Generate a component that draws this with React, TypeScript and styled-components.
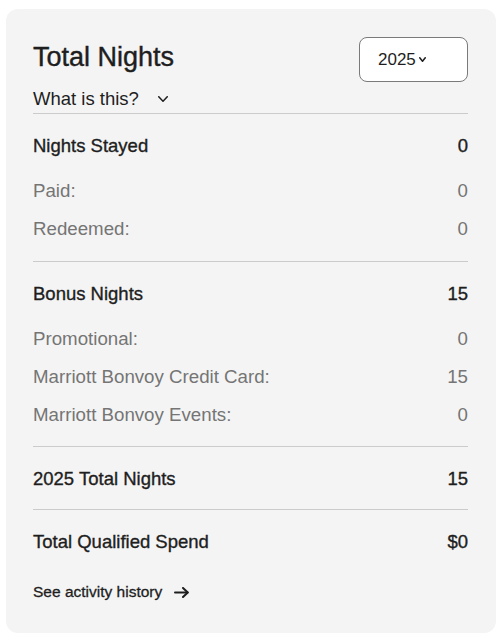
import React from "react";
import styled, { createGlobalStyle } from "styled-components";

const Global = createGlobalStyle`
  html, body { margin: 0; padding: 0; background: #ffffff; }
  body { font-family: "Liberation Sans", Arial, Helvetica, sans-serif; color: #1e1e1e; }
  * { box-sizing: border-box; }
`;

const Card = styled.section`
  margin: 9px 0 0 6px;
  width: 490px;
  background: #f4f4f4;
  border-radius: 12px;
  padding: 28px 28px 31px 27px;
  display: flex;
  flex-direction: column;
`;

const Header = styled.div`
  display: flex;
  justify-content: space-between;
  align-items: flex-start;
`;

const TitleBlock = styled.div`
  display: flex;
  flex-direction: column;
  padding-top: 5px;
`;

const Title = styled.h2`
  margin: 0;
  font-size: 27px;
  line-height: 30px;
  font-weight: 400;
  -webkit-text-stroke: 0.4px #1e1e1e;
  color: #1e1e1e;
`;

const WhatButton = styled.button`
  margin-top: 15px;
  padding: 0;
  border: 0;
  background: none;
  display: flex;
  align-items: center;
  gap: 19px;
  font-family: inherit;
  font-size: 18.5px;
  line-height: 24px;
  color: #1e1e1e;
  cursor: pointer;
`;

const YearSelect = styled.button`
  width: 109px;
  height: 45px;
  border: 1px solid #7a7a7a;
  border-radius: 8px;
  background: #ffffff;
  display: flex;
  align-items: center;
  padding: 0 0 0 18px;
  gap: 3px;
  font-family: inherit;
  font-size: 17px;
  color: #1e1e1e;
  cursor: pointer;
`;

const Divider = styled.hr`
  margin: 2px 0 0;
  border: 0;
  border-top: 1px solid #cbcbcb;
  height: 0;
`;

const Section = styled.div<{ $bottom?: number }>`
  display: flex;
  flex-direction: column;
  padding: 12px 0 ${(p) => p.$bottom ?? 13}px;
`;

const HeadRow = styled.div`
  display: flex;
  justify-content: space-between;
  align-items: center;
  height: 40px;
  font-size: 18.5px;
  color: #1e1e1e;
  -webkit-text-stroke: 0.35px #1e1e1e;
`;

const SubList = styled.div`
  display: flex;
  flex-direction: column;
  margin-top: 6px;
`;

const SubRow = styled.div`
  display: flex;
  justify-content: space-between;
  align-items: center;
  height: 38px;
  font-size: 18.7px;
  color: #757575;
`;

const LineDivider = styled.hr`
  margin: 0;
  border: 0;
  border-top: 1px solid #cbcbcb;
  height: 0;
`;

const HistoryLink = styled.a`
  margin-top: 20px;
  display: flex;
  align-items: center;
  gap: 12px;
  height: 20px;
  font-size: 15.5px;
  color: #1e1e1e;
  -webkit-text-stroke: 0.3px #1e1e1e;
  text-decoration: none;
  cursor: pointer;
`;

const Chevron = ({ w, h, sw }: { w: number; h: number; sw: number }) => (
  <svg width={w} height={h} viewBox={`0 0 ${w} ${h}`} fill="none">
    <path
      d={`M${sw / 2} ${sw / 2} L${w / 2} ${h - sw / 2} L${w - sw / 2} ${sw / 2}`}
      stroke="#1e1e1e"
      strokeWidth={sw}
      strokeLinecap="round"
      strokeLinejoin="round"
    />
  </svg>
);

const Arrow = () => (
  <svg width="15" height="11" viewBox="0 0 15 11" fill="none">
    <path d="M1 5.5 H13.5" stroke="#1e1e1e" strokeWidth="2" strokeLinecap="round" />
    <path
      d="M9 1 L13.8 5.5 L9 10"
      stroke="#1e1e1e"
      strokeWidth="2"
      strokeLinecap="round"
      strokeLinejoin="round"
    />
  </svg>
);

type Item = { label: string; value: string };

const Group = ({
  title,
  value,
  items,
  bottom,
}: {
  title: string;
  value: string;
  items: Item[];
  bottom?: number;
}) => (
  <Section $bottom={bottom}>
    <HeadRow>
      <span>{title}</span>
      <span>{value}</span>
    </HeadRow>
    <SubList>
      {items.map((it) => (
        <SubRow key={it.label}>
          <span>{it.label}</span>
          <span>{it.value}</span>
        </SubRow>
      ))}
    </SubList>
  </Section>
);

export default function App() {
  return (
    <>
      <Global />
      <Card>
        <Header>
          <TitleBlock>
            <Title>Total Nights</Title>
            <WhatButton>
              What is this?
              <Chevron w={10} h={6} sw={1.5} />
            </WhatButton>
          </TitleBlock>
          <YearSelect>
            2025
            <Chevron w={7} h={5} sw={1.5} />
          </YearSelect>
        </Header>
        <Divider />
        <Group
          title="Nights Stayed"
          value="0"
          items={[
            { label: "Paid:", value: "0" },
            { label: "Redeemed:", value: "0" },
          ]}
        />
        <LineDivider />
        <Group
          title="Bonus Nights"
          value="15"
          bottom={12}
          items={[
            { label: "Promotional:", value: "0" },
            { label: "Marriott Bonvoy Credit Card:", value: "15" },
            { label: "Marriott Bonvoy Events:", value: "0" },
          ]}
        />
        <LineDivider />
        <Section $bottom={10}>
          <HeadRow>
            <span>2025 Total Nights</span>
            <span>15</span>
          </HeadRow>
        </Section>
        <LineDivider />
        <Section $bottom={0}>
          <HeadRow>
            <span>Total Qualified Spend</span>
            <span>$0</span>
          </HeadRow>
        </Section>
        <HistoryLink>
          See activity history
          <Arrow />
        </HistoryLink>
      </Card>
    </>
  );
}
